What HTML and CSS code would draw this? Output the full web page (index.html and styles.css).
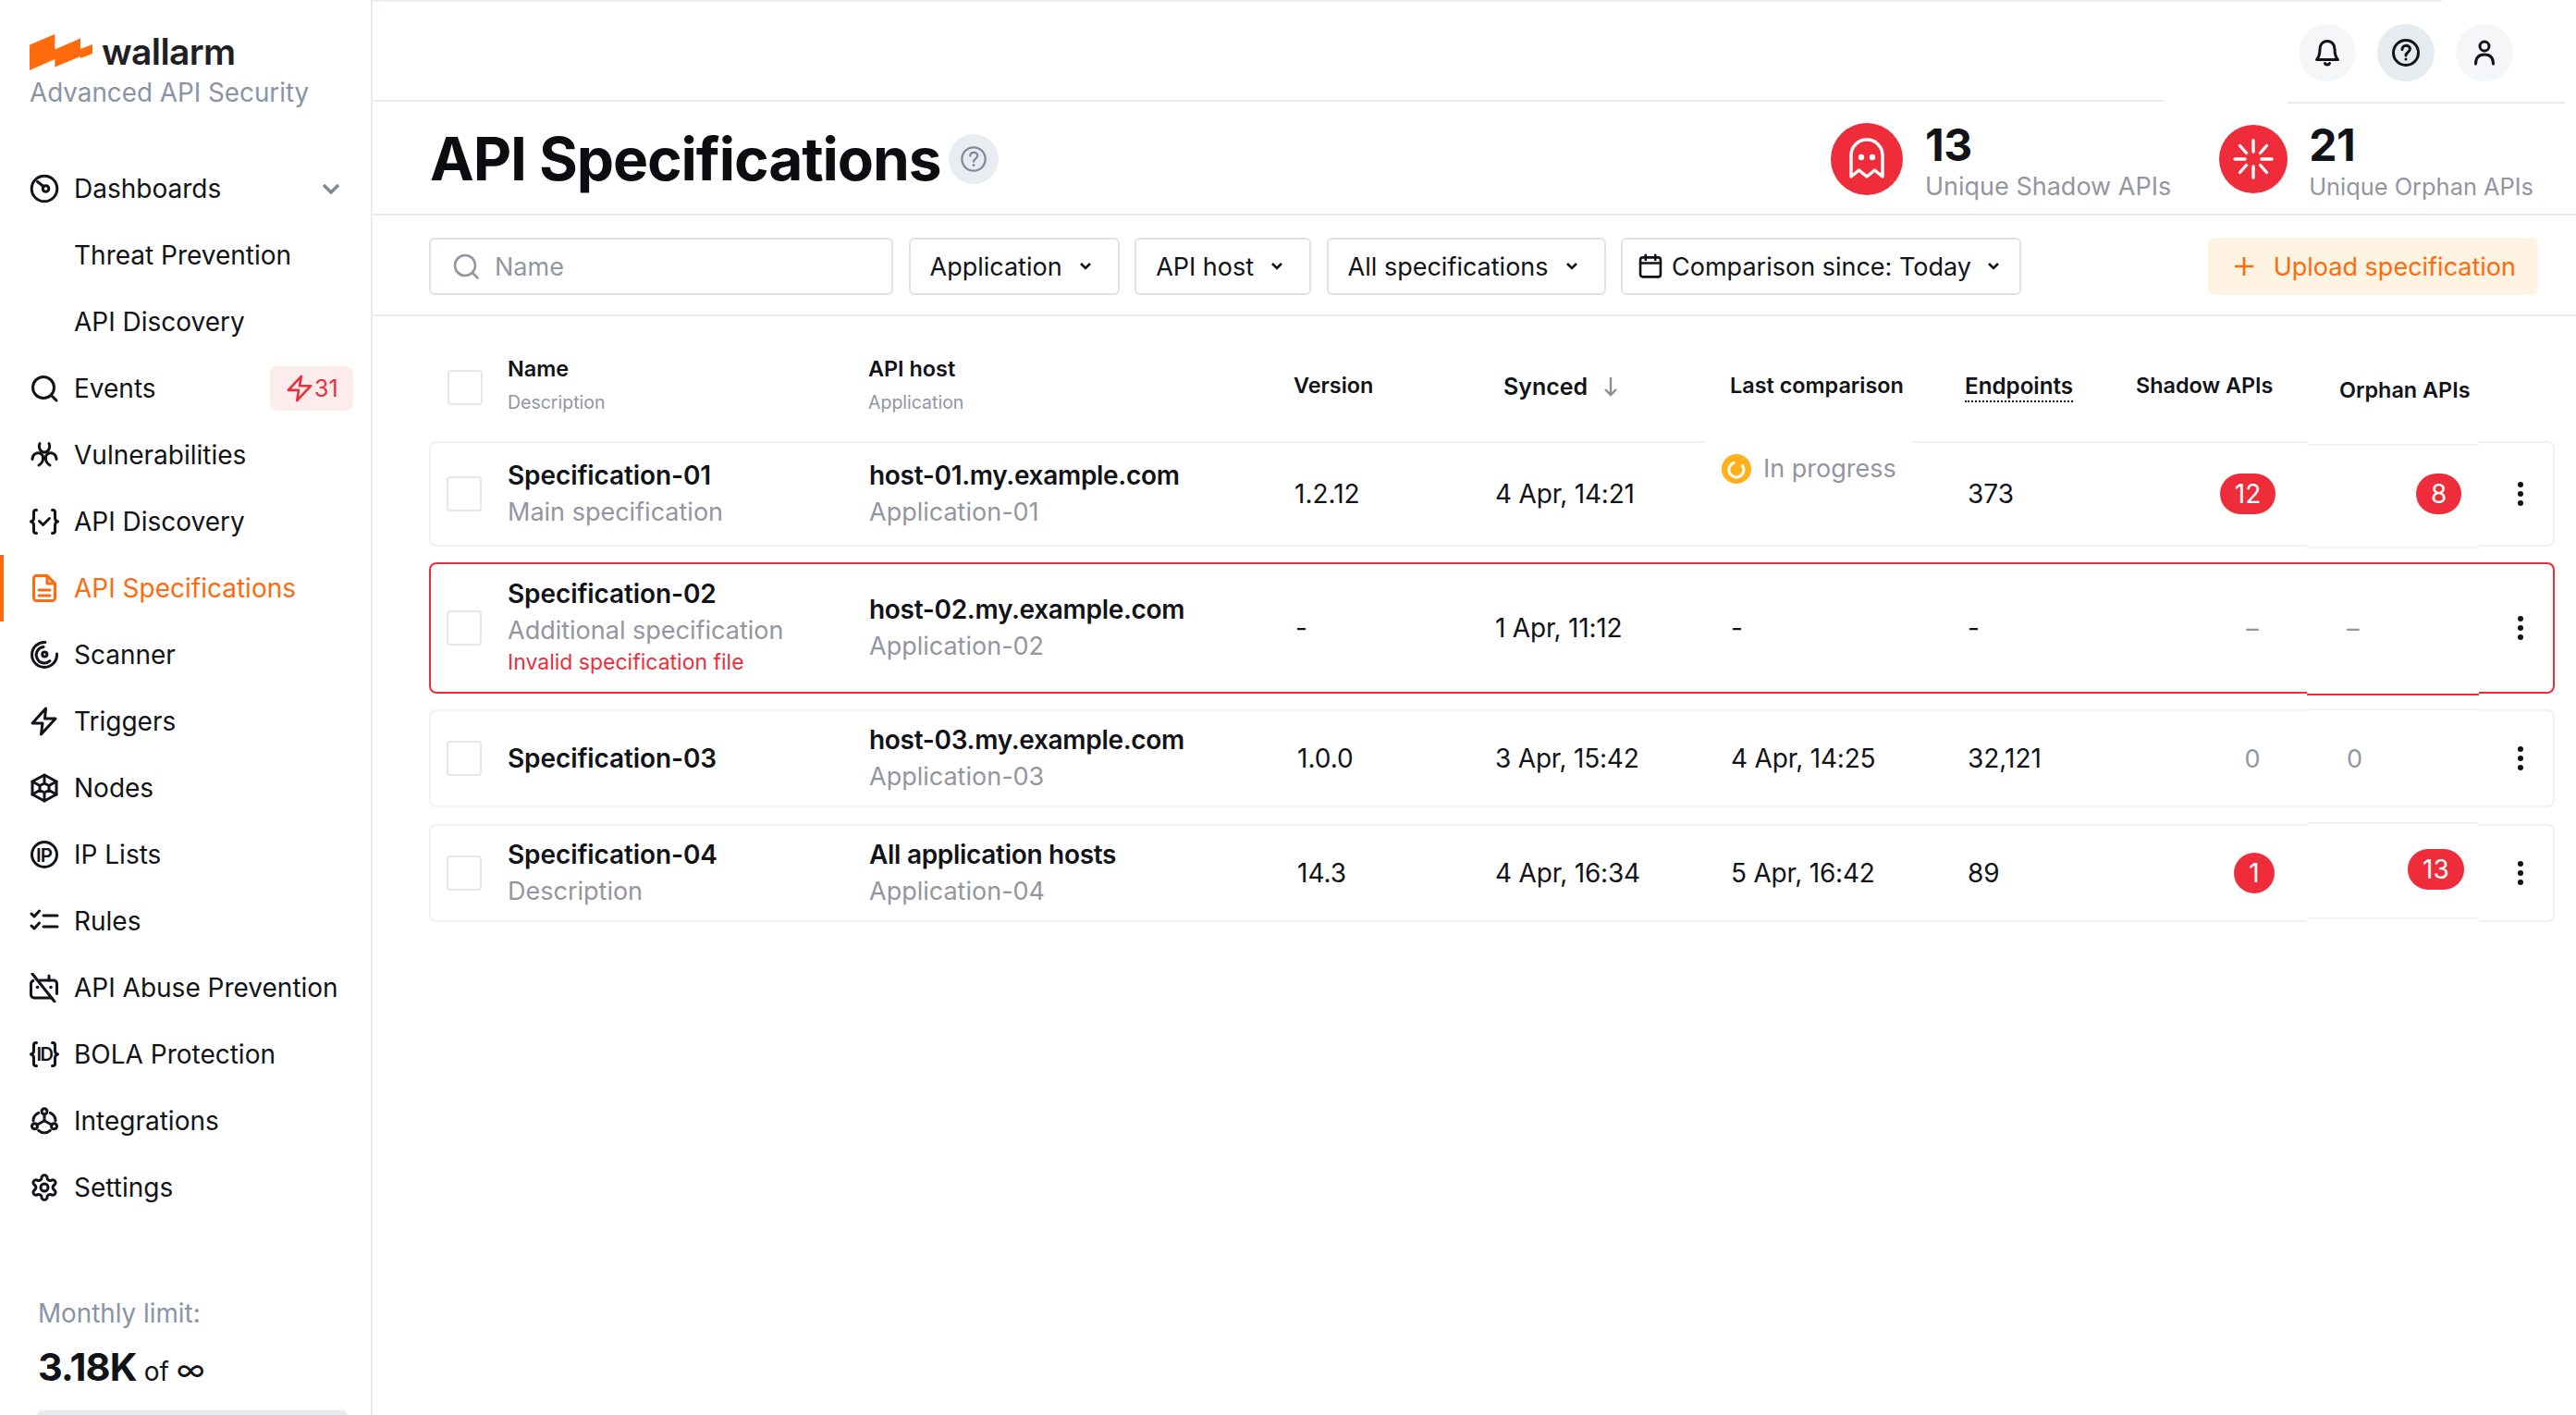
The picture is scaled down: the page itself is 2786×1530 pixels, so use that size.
FILE: index.html
```html
<!DOCTYPE html>
<html lang="en">
<head>
  <meta charset="UTF-8">
  <meta name="viewport" content="width=device-width, initial-scale=1.0">
  <title>API Specifications</title>
  <link rel="stylesheet" href="styles.css">
</head>
<body>
  <div class="app">
    <aside class="sidebar">
      <div class="brand">
        <div class="brand-row">
          <svg class="brand-logo" width="68" height="40" viewBox="0 0 68 40"><path fill="#ff6a0d" d="M0 12.5 27.3 1v16.5L55 5.500v11.500l13-5v10L55 27v-2L27.3 36.500V28L0 40z"/></svg>
          <span class="brand-name">wallarm</span>
        </div>
        <div class="brand-tag">Advanced API Security</div>
      </div>

      <nav class="nav">
        <a class="nav-item">
          <svg class="ico" viewBox="0 0 32 32"><circle cx="16" cy="16" r="13.8"/><circle cx="17.5" cy="16" r="3.3"/><path d="M8.5 8.500l6.500 5"/></svg>
          Dashboards
          <svg class="nav-chevron" viewBox="0 0 20 12"><path d="M2 2l8 8 8-8"/></svg>
        </a>
        <a class="nav-item nav-sub">Threat Prevention</a>
        <a class="nav-item nav-sub">API Discovery</a>
        <a class="nav-item">
          <svg class="ico" viewBox="0 0 32 32"><circle cx="15" cy="15" r="11.5"/><path d="M23.5 23.500l5.500 5.500"/></svg>
          Events
          <span class="nav-badge">
            <svg viewBox="0 0 32 32"><path d="M18 2 3 18h12l-2 12 16-17H16z"/></svg>31
          </span>
        </a>
        <a class="nav-item">
          <svg class="ico" viewBox="0 0 32 32"><path d="M11 3.500C9 8 12 13 16 13s7-5 5-9.500"/><path d="M3 20.500C3 15 8 12.500 12 14.500s3.500 9.500-2 12.500"/><path d="M29 20.500C29 15 24 12.500 20 14.500s-3.500 9.500 2 12.500"/></svg>
          Vulnerabilities
        </a>
        <a class="nav-item">
          <svg class="ico" viewBox="0 0 32 32"><path d="M7.500 3.500H6.800C5 3.500 4.500 4.800 4.500 6v6c0 2-1 3.500-3 4 2 .5 3 2 3 4v6c0 1.200.5 2.500 2.300 2.500h.7"/><path d="M24.500 3.500h.7c1.800 0 2.300 1.300 2.300 2.500v6c0 2 1 3.500 3 4-2 .5-3 2-3 4v6c0 1.200-.5 2.500-2.300 2.500h-.7"/><path d="M10.500 15.500l4 4 7-7"/></svg>
          API Discovery
        </a>
        <a class="nav-item nav-active">
          <svg class="ico" viewBox="0 0 32 32"><path d="M19 2.500H7.500a3 3 0 0 0-3 3v21a3 3 0 0 0 3 3h17a3 3 0 0 0 3-3V11z"/><path d="M19 2.500V11h8.500"/><path d="M10 18h12M10 24h12"/></svg>
          API Specifications
        </a>
        <a class="nav-item">
          <svg class="ico" viewBox="0 0 32 32"><path d="M17 2.500A13.500 13.500 0 1 0 29.500 15"/><path d="M15 7.500A8.500 8.500 0 0 0 8 19.500a8.500 8.500 0 0 0 14 3"/><circle cx="16.3" cy="15.5" r="2.6"/></svg>
          Scanner
        </a>
        <a class="nav-item">
          <svg class="ico" viewBox="0 0 32 32"><path d="M17.500 2 3 18h11l-1.500 12L28 13H16.500z"/></svg>
          Triggers
        </a>
        <a class="nav-item">
          <svg class="ico" viewBox="0 0 32 32"><path d="M16 2 29 9v14l-13 7-13-7V9z"/><path d="M16 2v9M3 9l8 4.500M29 9l-8 4.500M16 30v-9M3 23l8-4.500M29 23l-8-4.500M11 13.500v5l5 2.500 5-2.500v-5L16 11z"/></svg>
          Nodes
        </a>
        <a class="nav-item">
          <svg class="ico" viewBox="0 0 32 32"><circle cx="16" cy="16" r="13.5"/><text class="ico-text" x="15.5" y="23.5" text-anchor="middle">IP</text></svg>
          IP Lists
        </a>
        <a class="nav-item">
          <svg class="ico" viewBox="0 0 32 32"><path d="M2 8l3 3 5.500-6M2 21l3 3 5.500-6M15 10h15M15 22h15"/></svg>
          Rules
        </a>
        <a class="nav-item">
          <svg class="ico" viewBox="0 0 32 32"><path d="M11 8h15a3.500 3.500 0 0 1 3.500 3.500v11M24 27H5a3.500 3.500 0 0 1-3.500-3.500v-12C1.500 10 2.500 9 4 8.300"/><path d="M21 8V3M3 1l24 30"/><circle class="ico-dot" cx="8.5" cy="15.5" r="1.8"/><circle class="ico-dot" cx="23" cy="15.5" r="1.8"/></svg>
          API Abuse Prevention
        </a>
        <a class="nav-item">
          <svg class="ico" viewBox="0 0 32 32"><path d="M7.500 3.500H6.800C5 3.500 4.500 4.800 4.500 6v6c0 2-1 3.500-3 4 2 .5 3 2 3 4v6c0 1.200.5 2.500 2.300 2.500h.7"/><path d="M24.500 3.500h.7c1.800 0 2.300 1.300 2.300 2.500v6c0 2 1 3.500 3 4-2 .5-3 2-3 4v6c0 1.200-.5 2.500-2.300 2.500h-.7"/><text class="ico-text ico-text-sm" x="16" y="23" text-anchor="middle">ID</text></svg>
          BOLA Protection
        </a>
        <a class="nav-item">
          <svg class="ico" viewBox="0 0 32 32"><circle cx="16" cy="5.7" r="3"/><circle cx="5.5" cy="21.7" r="3"/><circle cx="26.5" cy="21.7" r="3"/><path d="M16 8.700v7M16 15.700l-8 4.500M16 15.700l8 4.500M4 15.700C4 12 6 9 9.700 7.300M28 15.700C28 12 26 9 22.300 7.300M9.700 26.300c3.800 3.300 8.800 3.300 12.600 0"/></svg>
          Integrations
        </a>
        <a class="nav-item">
          <svg class="ico" viewBox="0 0 24 24"><path class="ico-thin" d="M12.220 2h-.44a2 2 0 0 0-2 2v.18a2 2 0 0 1-1 1.730l-.43.25a2 2 0 0 1-2 0l-.15-.08a2 2 0 0 0-2.730.73l-.22.38a2 2 0 0 0 .73 2.730l.15.1a2 2 0 0 1 1 1.720v.51a2 2 0 0 1-1 1.740l-.15.09a2 2 0 0 0-.73 2.730l.22.38a2 2 0 0 0 2.730.73l.15-.08a2 2 0 0 1 2 0l.43.25a2 2 0 0 1 1 1.730V20a2 2 0 0 0 2 2h.44a2 2 0 0 0 2-2v-.18a2 2 0 0 1 1-1.730l.43-.25a2 2 0 0 1 2 0l.15.08a2 2 0 0 0 2.730-.73l.22-.39a2 2 0 0 0-.73-2.730l-.15-.08a2 2 0 0 1-1-1.740v-.5a2 2 0 0 1 1-1.740l.15-.09a2 2 0 0 0 .73-2.730l-.22-.38a2 2 0 0 0-2.730-.73l-.15.08a2 2 0 0 1-2 0l-.43-.25a2 2 0 0 1-1-1.730V4a2 2 0 0 0-2-2z"/><circle class="ico-thin" cx="12" cy="12" r="3"/></svg>
          Settings
        </a>
      </nav>

      <div class="limit">
        <div class="limit-label">Monthly limit:</div>
        <div class="limit-value"><strong>3.18K</strong> of <span class="limit-inf">∞</span></div>
        <div class="limit-bar"></div>
      </div>
    </aside>

    <main class="main">
      <div class="rule-top"></div>
      <header class="topbar">
        <button class="round-btn">
          <svg class="ico" viewBox="0 0 32 32"><path d="M16 3.500c-5 0-8 4-8 8.500 0 6-1 9-3.500 11.500h23C25 21 24 18 24 12c0-4.500-3-8.500-8-8.500z"/><path d="M13.500 27.500c.7 2 4.300 2 5 0"/></svg>
        </button>
        <button class="round-btn round-btn-on">
          <svg class="ico" viewBox="0 0 32 32"><circle cx="16" cy="16" r="13.5"/><path d="M12 12.500c0-5.500 8.500-5.500 8.500-.5 0 3.500-4.500 3.500-4.500 7"/><circle class="ico-dot" cx="16" cy="23" r="1.5"/></svg>
        </button>
        <button class="round-btn">
          <svg class="ico" viewBox="0 0 32 32"><circle cx="16" cy="9" r="5"/><path d="M6.500 28c0-7 4-10 9.500-10s9.500 3 9.500 10"/></svg>
        </button>
      </header>
      <div class="rule-head"><span class="rule-left"></span><span class="rule-right"></span></div>

      <section class="title-row">
        <h1 class="page-title">API Specifications</h1>
        <span class="title-help">
          <svg viewBox="0 0 32 32"><circle cx="16" cy="16" r="13.5"/><path d="M12 12.500c0-5.500 8.500-5.500 8.500-.5 0 3.500-4.500 3.500-4.500 7"/><circle class="help-dot" cx="16" cy="23" r="1.5"/></svg>
        </span>
        <div class="stat stat-shadow">
          <span class="stat-icon">
            <svg viewBox="0 0 78 78"><path d="M22 58V35a17 17 0 0 1 34 0v23l-8.500-7-8.500 7-8.500-7z"/><circle class="stat-dot" cx="33" cy="37" r="3.2"/><circle class="stat-dot" cx="45" cy="37" r="3.2"/></svg>
          </span>
          <div class="stat-text">
            <div class="stat-num">13</div>
            <div class="stat-label">Unique Shadow APIs</div>
          </div>
        </div>
        <div class="stat stat-orphan">
          <span class="stat-icon">
            <svg viewBox="0 0 74 74"><path d="M37 17v12M37 45v12M17 37h11M46 37h11M22.500 22.500l7 8M51.500 22.500l-7 8M22.500 51.500l7-8M51.500 51.500l-7-8"/></svg>
          </span>
          <div class="stat-text">
            <div class="stat-num">21</div>
            <div class="stat-label">Unique Orphan APIs</div>
          </div>
        </div>
      </section>

      <section class="filters">
        <label class="search">
          <svg viewBox="0 0 32 32"><circle cx="15" cy="15" r="11"/><path d="M23 23l5.500 5.500"/></svg>
          <span>Name</span>
        </label>
        <button class="select">Application<svg class="chev" viewBox="0 0 14 10"><path d="M2 2l5 5 5-5"/></svg></button>
        <button class="select">API host<svg class="chev" viewBox="0 0 14 10"><path d="M2 2l5 5 5-5"/></svg></button>
        <button class="select">All specifications<svg class="chev" viewBox="0 0 14 10"><path d="M2 2l5 5 5-5"/></svg></button>
        <button class="select select-date">
          <svg class="ico cal" viewBox="0 0 32 32"><rect x="3.5" y="5" width="25" height="24" rx="3"/><path d="M3.500 12h25M10 2v6M22 2v6"/></svg>
          Comparison since: Today<svg class="chev" viewBox="0 0 14 10"><path d="M2 2l5 5 5-5"/></svg>
        </button>
        <button class="upload">
          <svg viewBox="0 0 22 22"><path d="M11 1v20M1 11h20"/></svg>
          Upload specification
        </button>
      </section>

      <section class="table">
        <div class="table-head">
          <span class="check"></span>
          <div><div class="head-title">Name</div><div class="head-sub">Description</div></div>
          <div><div class="head-title">API host</div><div class="head-sub">Application</div></div>
          <div class="head-title">Version</div>
          <div class="head-title head-synced">Synced <svg class="sort" viewBox="0 0 18 24"><path d="M9 2v19M3 15l6 6 6-6"/></svg></div>
          <div class="head-title">Last comparison</div>
          <div class="head-title head-endpoints"><span class="dotted">Endpoints</span></div>
          <div class="head-title">Shadow APIs</div>
          <div class="head-title head-orphan">Orphan APIs</div>
        </div>

        <div class="row row-one">
          <i class="patch"></i>
          <span class="check"></span>
          <div class="cell-stack"><div class="strong">Specification-01</div><div class="muted">Main specification</div></div>
          <div class="cell-stack"><div class="strong host">host-01.my.example.com</div><div class="muted">Application-01</div></div>
          <div class="version-first">1.2.12</div>
          <div class="date">4 Apr, 14:21</div>
          <div class="progress">
            <svg viewBox="0 0 32 32"><circle class="progress-fill" cx="16" cy="16" r="16"/><path d="M13 9.500a8 8 0 1 0 9.500 3"/></svg>
            <span class="muted">In progress</span>
          </div>
          <div>373</div>
          <div class="cell-shadow"><span class="pill pill-left">12</span></div>
          <div class="cell-orphan"><span class="pill pill-eight">8</span></div>
          <svg class="dots" viewBox="0 0 8 32"><circle cx="4" cy="6" r="3"/><circle cx="4" cy="16" r="3"/><circle cx="4" cy="26" r="3"/></svg>
        </div>

        <div class="row row-error">
          <i class="patch"></i>
          <span class="check"></span>
          <div class="cell-stack stack-error"><div class="strong">Specification-02</div><div class="muted">Additional specification</div><div class="error">Invalid specification file</div></div>
          <div class="cell-stack"><div class="strong host">host-02.my.example.com</div><div class="muted">Application-02</div></div>
          <div class="dash-cell">-</div>
          <div class="date">1 Apr, 11:12</div>
          <div>-</div>
          <div>-</div>
          <div class="cell-shadow muted">–</div>
          <div class="cell-orphan muted orphan-plain">–</div>
          <svg class="dots" viewBox="0 0 8 32"><circle cx="4" cy="6" r="3"/><circle cx="4" cy="16" r="3"/><circle cx="4" cy="26" r="3"/></svg>
        </div>

        <div class="row row-three">
          <i class="patch"></i>
          <span class="check"></span>
          <div class="strong">Specification-03</div>
          <div class="cell-stack"><div class="strong host">host-03.my.example.com</div><div class="muted">Application-03</div></div>
          <div>1.0.0</div>
          <div class="date">3 Apr, 15:42</div>
          <div class="date">4 Apr, 14:25</div>
          <div>32,121</div>
          <div class="cell-shadow muted">0</div>
          <div class="cell-orphan muted orphan-plain">0</div>
          <svg class="dots" viewBox="0 0 8 32"><circle cx="4" cy="6" r="3"/><circle cx="4" cy="16" r="3"/><circle cx="4" cy="26" r="3"/></svg>
        </div>

        <div class="row row-four">
          <i class="patch"></i>
          <span class="check"></span>
          <div class="cell-stack"><div class="strong">Specification-04</div><div class="muted">Description</div></div>
          <div class="cell-stack"><div class="strong host">All application hosts</div><div class="muted">Application-04</div></div>
          <div>14.3</div>
          <div class="date">4 Apr, 16:34</div>
          <div class="date">5 Apr, 16:42</div>
          <div>89</div>
          <div class="cell-shadow"><span class="pill pill-one">1</span></div>
          <div class="cell-orphan"><span class="pill pill-thirteen">13</span></div>
          <svg class="dots" viewBox="0 0 8 32"><circle cx="4" cy="6" r="3"/><circle cx="4" cy="16" r="3"/><circle cx="4" cy="26" r="3"/></svg>
        </div>
      </section>
    </main>
  </div>
</body>
</html>
```

FILE: styles.css
```css
* {
  box-sizing: border-box;
}
html, body {
  margin: 0;
  height: 100%;
  background: #fff;
}
body {
  font-family: Inter, "Noto Sans", sans-serif;
  font-size: 28px;
  color: #111318;
  overflow: hidden;
}
button {
  font: inherit;
  color: inherit;
  background: none;
  border: none;
  padding: 0;
}
.app {
  display: flex;
  height: 1530px;
}

/* sidebar */
.sidebar {
  width: 403px;
  flex: none;
  display: flex;
  flex-direction: column;
  border-right: 2px solid #e8ecf1;
}
.brand {
  padding: 36px 0 0 32px;
  height: 168px;
}
.brand-row {
  display: flex;
  align-items: center;
  gap: 10px;
  height: 40px;
}
.brand-name {
  font-size: 39px;
  font-weight: 600;
  letter-spacing: -0.6px;
  color: #1f2023;
  line-height: 40px;
}
.brand-tag {
  margin-top: 6px;
  color: #8a94a8;
  font-size: 27.8px;
  line-height: 36px;
}
.nav-item {
  display: flex;
  align-items: center;
  gap: 16px;
  height: 72px;
  padding-left: 32px;
  white-space: nowrap;
}
.nav-sub {
  padding-left: 80px;
}
.nav-active {
  color: #ff6a0d;
  box-shadow: inset 4px 0 0 #ff6a0d;
}
.ico {
  width: 32px;
  height: 32px;
  flex: none;
  fill: none;
  stroke: currentColor;
  stroke-width: 3;
  stroke-linecap: round;
  stroke-linejoin: round;
}
.ico-thin {
  stroke-width: 2.25;
}
.ico-dot {
  fill: currentColor;
  stroke: none;
}
.ico-text {
  font-size: 20.5px;
  font-weight: 600;
  letter-spacing: -1px;
  fill: currentColor;
  stroke: none;
}
.ico-text-sm {
  font-size: 20px;
  letter-spacing: -1.5px;
}
.nav-chevron {
  width: 20px;
  height: 12px;
  margin-left: auto;
  margin-right: 33px;
  fill: none;
  stroke: #7f8899;
  stroke-width: 3.5;
}
.nav-badge {
  display: flex;
  align-items: center;
  gap: 1px;
  width: 90px;
  height: 48px;
  margin-left: auto;
  margin-right: 19px;
  padding-left: 17px;
  border-radius: 8px;
  background: #fdecec;
  color: #ef2d3a;
  font-size: 25px;
}
.nav-badge svg {
  width: 30px;
  height: 32px;
  fill: none;
  stroke: currentColor;
  stroke-width: 2.8;
  stroke-linejoin: round;
}
.limit {
  margin-top: auto;
  padding-left: 41px;
  height: 130px;
}
.limit-label {
  color: #8a94a8;
  font-size: 27.8px;
  line-height: 40px;
}
.limit-value {
  line-height: 60px;
  margin-top: 8px;
}
.limit-value strong {
  font-size: 41.5px;
  font-weight: 700;
  letter-spacing: -0.8px;
}
.limit-inf {
  font-size: 33px;
  line-height: 20px;
}
.limit-bar {
  width: 336px;
  height: 20px;
  margin: 12px 0 0 -1px;
  border-radius: 6px;
  background: #e8ebf0;
}

/* main column */
.main {
  flex: 1;
  min-width: 0;
}
.rule-top {
  width: 2238px;
  height: 2px;
  background: #eceff3;
}
.topbar {
  height: 106px;
  display: flex;
  align-items: center;
  justify-content: flex-end;
  gap: 23px;
  padding: 4px 68px 0 0;
}
.round-btn {
  width: 62px;
  height: 62px;
  display: flex;
  align-items: center;
  justify-content: center;
  border-radius: 50%;
  background: #f5f6f7;
}
.round-btn-on {
  background: #e6ebf0;
}
.rule-head {
  display: flex;
  height: 4px;
}
.rule-left {
  width: 1937px;
  height: 2px;
  background: #e8ecf1;
}
.rule-right {
  width: 300px;
  height: 2px;
  margin: 2px 0 0 134px;
  background: #e8ecf1;
}
.title-row {
  display: flex;
  align-items: center;
  height: 121px;
  padding: 0 46px 0 62px;
  border-bottom: 2px solid #e8ecf1;
}
.page-title {
  margin: 0;
  font-size: 64px;
  font-weight: 700;
  letter-spacing: -1.1px;
  line-height: 80px;
  color: #0c0d10;
}
.title-help {
  width: 54px;
  height: 54px;
  margin-left: 9px;
  display: flex;
  align-items: center;
  justify-content: center;
  border-radius: 50%;
  background: #e9edf1;
}
.title-help svg {
  width: 30px;
  height: 30px;
  fill: none;
  stroke: #7f8899;
  stroke-width: 2.4;
  stroke-linecap: round;
}
.help-dot {
  fill: #7f8899;
  stroke: none;
}
.stat {
  display: flex;
  align-items: center;
}
.stat-shadow {
  margin-left: auto;
  gap: 24px;
}
.stat-orphan {
  margin-left: 52px;
  gap: 23px;
}
.stat-icon {
  display: flex;
  flex: none;
  width: 78px;
  height: 78px;
  border-radius: 50%;
  background: #ef2d3a;
}
.stat-orphan .stat-icon {
  width: 74px;
  height: 74px;
}
.stat-icon svg {
  width: 100%;
  height: 100%;
  fill: none;
  stroke: #fff;
  stroke-width: 3.4;
  stroke-linecap: round;
  stroke-linejoin: round;
}
.stat-icon .stat-dot {
  fill: #fff;
  stroke: none;
}
.stat-text {
  padding-top: 7px;
}
.stat-num {
  font-size: 48px;
  font-weight: 700;
  line-height: 54px;
  letter-spacing: -0.5px;
}
.stat-label {
  color: #9396a0;
  font-size: 27px;
  line-height: 36px;
  white-space: nowrap;
}
.stat-orphan .stat-label {
  font-size: 25.4px;
}

/* filters */
.filters {
  display: flex;
  gap: 16.5px;
  height: 109px;
  padding: 24px 41px 0 61px;
  border-bottom: 2px solid #e8ecf1;
  align-items: flex-start;
  font-size: 27px;
}
.search, .select {
  display: flex;
  align-items: center;
  height: 62px;
  border: 2px solid #dfe2e8;
  border-radius: 6px;
  white-space: nowrap;
}
.search {
  width: 502px;
  padding-left: 22px;
  gap: 15px;
  color: #9396a0;
}
.search svg {
  width: 32px;
  height: 32px;
  fill: none;
  stroke: #9396a0;
  stroke-width: 2.6;
  stroke-linecap: round;
}
.select {
  padding: 0 28px 0 21px;
  gap: 18px;
}
.select-date {
  padding: 0 21px 0 16px;
  gap: 9px;
}
.select-date .chev {
  margin-left: 8px;
}
.cal {
  width: 28px;
  height: 28px;
}
.chev {
  width: 14px;
  height: 10px;
  flex: none;
  fill: none;
  stroke: #111318;
  stroke-width: 2.6;
}
.upload {
  display: flex;
  align-items: center;
  gap: 21px;
  height: 62px;
  margin-left: auto;
  padding: 0 24px 0 28px;
  border-radius: 6px;
  background: #fff3e2;
  color: #ff6a0d;
  white-space: nowrap;
}
.upload svg {
  width: 22px;
  height: 22px;
  fill: none;
  stroke: currentColor;
  stroke-width: 2.6;
}

/* table */
.table {
  padding: 0 23px 0 61px;
}
.table-head {
  display: grid;
  grid-template-columns: 85px 390px 460px 227px 245px 254px 185px 220px 1fr;
  align-items: center;
  height: 135px;
  padding-top: 14px;
}
.table-head .check {
  margin-left: 20px;
  position: relative;
  top: 2px;
}
.head-title {
  font-size: 23.4px;
  font-weight: 600;
  line-height: 36px;
  white-space: nowrap;
}
.head-sub {
  font-size: 19.5px;
  line-height: 36px;
  color: #9396a0;
}
.head-synced {
  font-size: 25px;
  padding-top: 2px;
}
.head-endpoints {
  font-size: 24.2px;
  padding-top: 2px;
}
.head-orphan {
  padding-top: 10px;
}
.dotted {
  display: inline-block;
  line-height: 30px;
  border-bottom: 2px dotted #111318;
}
.sort {
  width: 18px;
  height: 24px;
  margin-left: 9px;
  vertical-align: -3px;
  fill: none;
  stroke: #8c8f98;
  stroke-width: 2.4;
}
.check {
  display: block;
  width: 38px;
  height: 38px;
  border: 2px solid #e6e7ea;
  border-radius: 4px;
  background: #fff;
}
.row {
  position: relative;
  isolation: isolate;
  display: grid;
  grid-template-columns: 83px 391px 463px 214px 255px 256px 212px 192px 160px 1fr;
  align-items: center;
  margin-bottom: 17px;
  border: 2px solid #f0f1f3;
  border-radius: 8px;
  white-space: nowrap;
}
.row .check {
  margin-left: 17px;
}
.row-one {
  height: 114px;
}
.row-error {
  height: 142px;
  border-color: #ef2d3a;
}
.row-three, .row-four {
  height: 106px;
}
.row-four {
  margin-top: 18px;
}
.strong {
  font-weight: 600;
  letter-spacing: -0.1px;
}
.strong.host {
  letter-spacing: -0.3px;
}
.muted {
  color: #9396a0;
  font-size: 27px;
}
.date {
  letter-spacing: -0.2px;
}
.dash-cell {
  margin-left: -2px;
}
.cell-stack > div {
  line-height: 39px;
}
.stack-error {
  padding-bottom: 4px;
}
.cell-stack .error {
  font-size: 23px;
  line-height: 30px;
  color: #ef2d3a;
}
.version-first {
  margin-left: -3px;
}
.progress {
  align-self: start;
  justify-self: start;
  display: flex;
  align-items: center;
  gap: 13px;
  width: 224px;
  margin: -2px 0 0 -28px;
  padding: 13px 0 0 18px;
  background: #fff;
}
.progress svg {
  width: 32px;
  height: 32px;
  fill: none;
  stroke: #fff;
  stroke-width: 3;
  stroke-linecap: round;
}
.progress .progress-fill {
  fill: #ffb01a;
  stroke: none;
}
.cell-shadow {
  text-align: center;
}
.cell-orphan .pill-eight {
  margin-left: 81px;
}
.cell-orphan .pill-thirteen {
  margin-left: 72px;
  position: relative;
  top: -4px;
}
.orphan-plain {
  padding-left: 6px;
}
.pill-left {
  position: relative;
  left: -5px;
}
.pill-one {
  position: relative;
  left: 2px;
}
.pill {
  display: inline-block;
  min-width: 43px;
  padding: 0 16px;
  line-height: 44px;
  border-radius: 22px;
  background: #ef2d3a;
  color: #fff;
  text-align: center;
}
.dots {
  width: 8px;
  height: 32px;
  margin-left: 30px;
  fill: #111318;
}
/* row edges step a little out of line under the orphan column */
.patch {
  position: absolute;
  z-index: -1;
  left: 2029px;
  width: 186px;
  background: #fff;
}
.row-one .patch {
  top: 1px;
  bottom: -4px;
  border-top: 2px solid #f0f1f3;
  border-bottom: 2px solid #f0f1f3;
  box-shadow: 0 -4px 0 #fff;
}
.row-error .patch {
  top: 0;
  bottom: -4px;
  border-bottom: 2px solid #ef2d3a;
}
.row-three .patch {
  top: -3px;
  bottom: 0;
  border-top: 2px solid #f0f1f3;
}
.row-four .patch {
  top: -4px;
  bottom: 1px;
  border-top: 2px solid #f0f1f3;
  border-bottom: 2px solid #f0f1f3;
  box-shadow: 0 4px 0 #fff;
}
```
